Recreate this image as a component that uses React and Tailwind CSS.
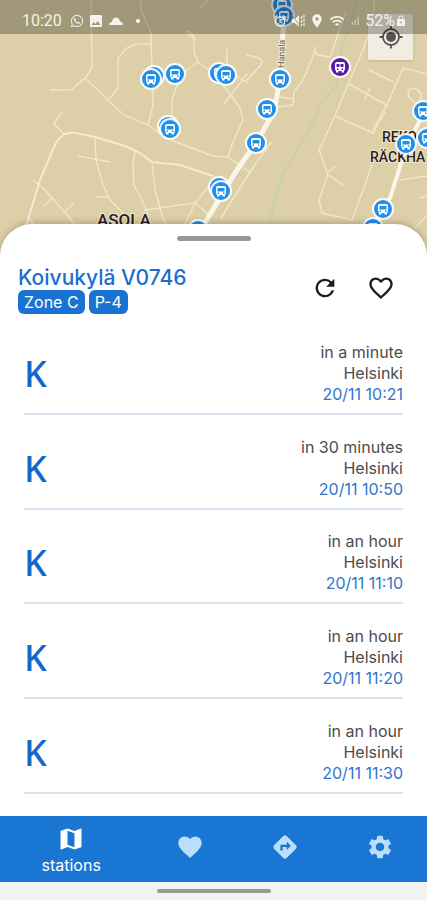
import React from 'react';
import {
  MdAlarm,
  MdDirections,
  MdFavorite,
  MdFavoriteBorder,
  MdImage,
  MdLocationOn,
  MdLock,
  MdMap,
  MdRefresh,
  MdSettings,
  MdSignalCellularAlt,
  MdWifi,
} from 'react-icons/md';
import { FaWhatsapp } from 'react-icons/fa';

const departures = [
  { line: 'K', relative: 'in a minute', destination: 'Helsinki', time: '20/11 10:21' },
  { line: 'K', relative: 'in 30 minutes', destination: 'Helsinki', time: '20/11 10:50' },
  { line: 'K', relative: 'in an hour', destination: 'Helsinki', time: '20/11 11:10' },
  { line: 'K', relative: 'in an hour', destination: 'Helsinki', time: '20/11 11:20' },
  { line: 'K', relative: 'in an hour', destination: 'Helsinki', time: '20/11 11:30' },
];

const stops = [
  [282, 5], [284, 16], [154, 76], [151, 79], [175, 74], [219, 73], [226, 75],
  [280, 79], [267, 109], [168, 126], [170, 129], [256, 143], [219, 187],
  [221, 191], [198, 230], [423, 111], [427, 138], [406, 144], [373, 228], [383, 209],
];

const streets = [
  'M91 0 L92 68 L85 78 L71 90 H50',
  'M85 78 L108 100 L124 115 L148 125 L165 138 L213 156 L228 157 L250 172',
  'M141 0 V10 L151 33 L152 75 L153 105 L148 125',
  'M151 44 H136 L127 48 L118 58 V88 L108 100',
  'M201 7 L209 0',
  'M194 38 C182 32 186 28 192 34 L194 38 V52 L198 62 L187 70 L176 88 L172 100 V125',
  'M198 62 L216 76 L230 94 L240 108 L243 120 L233 142 L228 157',
  'M64 134 L54 124 L61 113',
  'M95 137 L96 160 L103 185 L110 200 L124 214',
  'M78 156 L110 162 M96 197 H108',
  'M135 150 L133 165 L134 185 L147 210 V224',
  'M152 162 L155 190 L162 215 L167 226',
  'M145 210 L195 203 L213 181 M195 203 L207 213 M195 203 L184 226',
  'M33 180 L45 190 L75 224 M45 205 L52 198 M74 203 L65 212 M28 216 L34 226',
  'M227 49 V65 M247 55 C262 58 266 60 258 68 L247 80 M247 74 L224 104 M236 75 L247 83',
  'M315 47 V52 L318 55 L330 57 L345 14 M315 52 L303 80 L294 92 L293 105 L277 107 M280 97 L294 99',
  'M271 142 L250 172 L221 218',
  'M374 0 V18 L363 50 L349 82 L335 116 L319 150 L328 175 L319 200 L322 213 L352 220 L372 165',
  'M349 84 L388 106 M369 70 L393 82 M335 116 L373 133 L385 112 M365 99 L370 88 M373 130 L390 98 L403 68 L427 74',
  'M328 172 L335 167 M328 175 L343 185 M400 180 L427 176 M420 198 L427 196 M427 215 L415 228',
  'M414 102 C404 94 408 86 416 89 C422 92 422 96 420 100',
];

function StopPin({ x, y, train }) {
  return (
    <g transform={`translate(${x} ${y})`}>
      <circle r="11" fill="#fff" opacity="0.9" />
      <circle r="9" fill={train ? '#5a17a8' : '#2090ee'} />
      <rect x="-5" y="-5" width="10" height="9" rx="2" fill="#fff" />
      <path d="M-4 3h2.500v2.500h-2.500z M1.500 3h2.500v2.500h-2.500z" fill="#fff" />
      {train ? (
        <path d="M-3.500 -3h3v3h-3z M0.500 -3h3v3h-3z M-3 1.500h1.500v1.500h-1.500z M1.500 1.500h1.500v1.500h-1.500z" fill="#5a17a8" />
      ) : (
        <path d="M-3.500 -3h7v3.500h-7z M-3.500 1.500h1.500v1.500h-1.500z M2 1.500h1.500v1.500h-1.500z" fill="#2090ee" />
      )}
    </g>
  );
}

function StationMap() {
  return (
    <svg
      className="block w-full h-full"
      viewBox="0 0 427 256"
      preserveAspectRatio="xMidYMin slice"
      role="img"
      aria-label="Map"
    >
      <rect width="427" height="256" fill="#ddcfa7" />
      <g fill="none" strokeLinejoin="round" strokeLinecap="round">
        <path d="M356 0 L350 28 L341 48 L342 66 L336 86 L319 104 M320 108 L308 132 L298 148 L284 172 L276 196 L269 226" stroke="#c5cfb4" strokeWidth="2" />
        {streets.map((d) => (
          <path key={d} d={d} stroke="#f1e6c9" strokeWidth="1.500" />
        ))}
        <path d="M26 226 L40 180 L54 147 C60 134 66 132 76 133 L95 137 L125 146 L140 153 L152 162 L180 165 L213 176" stroke="#f4ebd4" strokeWidth="2" />
        <path d="M285 0 L280 79 L274 112 L256 143 L235 173 L203 226" stroke="#fbf6ea" strokeWidth="5" />
        <path d="M427 106 L406 148 L390 198 L372 230" stroke="#fbf6ea" strokeWidth="4" />
      </g>
      <g fontFamily="Roboto, sans-serif" stroke="#f1e7cd" strokeWidth="2" paintOrder="stroke" fill="#2b1c20">
        <text x="97" y="226" fontSize="17" fontWeight="500">ASOLA</text>
        <text x="382" y="142" fontSize="14" fontWeight="500">REKO</text>
        <text x="370" y="162" fontSize="14" fontWeight="500">RÄCKHA</text>
        <text transform="translate(284 68) rotate(-88)" fontSize="9" fill="#6b6557">Hanala</text>
      </g>
      {stops.map(([x, y]) => (
        <StopPin key={`${x}-${y}`} x={x} y={y} />
      ))}
      <StopPin x={340} y={67} train />
    </svg>
  );
}

function LocateIcon() {
  return (
    <svg className="w-6 h-6" viewBox="0 0 24 24" fill="none" stroke="currentColor" strokeWidth="1.800">
      <circle cx="12" cy="12" r="8" />
      <circle cx="12" cy="12" r="5" fill="currentColor" stroke="none" />
      <path d="M12 0.500v3.500M12 20v3.500M0.500 12h3.500M20 12h3.500" />
    </svg>
  );
}

function StatusBar() {
  return (
    <div className="absolute inset-x-0 top-0 h-[34px] pt-2 pl-[22px] pr-5 flex items-center justify-between bg-black/27 text-[#f5f2ea] text-base font-['Roboto',sans-serif]">
      <div className="flex items-center gap-1">
        <span className="mr-1">10:20</span>
        <FaWhatsapp className="w-[14px] h-[14px]" />
        <MdImage className="w-4 h-4" />
        <svg className="w-4 h-4" viewBox="0 0 16 16" fill="currentColor">
          <path d="M1 12c0-2 1.500-3 3-3C4 6 6 4.500 8 4.500S11.500 6 12 8.500c2 0 3 1.500 3 3.500z" />
        </svg>
        <span className="w-1 h-1 ml-2 rounded-full bg-white" />
      </div>
      <div className="flex items-center gap-1">
        <MdAlarm className="w-[14px] h-[14px]" />
        <svg className="w-[14px] h-[14px]" viewBox="0 0 14 14" fill="currentColor">
          <path d="M1 5h2.500L8 1.500v11L3.500 9H1z" />
          <path d="M1 1l8 11" stroke="#a3987c" strokeWidth="1" />
          <path d="M10.500 2v10M13 1v12" stroke="currentColor" strokeWidth="1.200" strokeDasharray="3 1" />
        </svg>
        <MdLocationOn className="w-4 h-4" />
        <MdWifi className="w-4 h-4" />
        <MdSignalCellularAlt className="w-3 h-3 opacity-50" />
        <span>52%</span>
        <MdLock className="w-3 h-3 -ml-1" />
      </div>
    </div>
  );
}

function DepartureRow({ departure }) {
  return (
    <li className="flex-1 flex items-end justify-between border-b-2 border-[#d9e1f2] pb-2">
      <span className="text-4xl leading-[62px] font-medium text-[#1267c8] font-['Noto_Sans',sans-serif]">
        {departure.line}
      </span>
      <div className="text-right text-base leading-[21px] text-[#4c4c4c]">
        <p>{departure.relative}</p>
        <p>{departure.destination}</p>
        <p className="text-[#2f75cc]">{departure.time}</p>
      </div>
    </li>
  );
}

export default function App() {
  return (
    <div className="min-h-screen flex flex-col bg-white font-['Inter','Roboto',sans-serif]">
      <div className="relative h-64 shrink-0">
        <StationMap />
        <button
          type="button"
          aria-label="My location"
          className="absolute top-[14px] right-[14px] w-[45px] h-[46px] flex items-center justify-center bg-[#f3efe7]/90 rounded-xs shadow text-[#555]"
        >
          <LocateIcon />
        </button>
        <StatusBar />
      </div>

      <main className="relative -mt-8 flex-1 flex flex-col bg-white rounded-t-[32px] shadow-[0_-2px_6px_rgba(0,0,0,0.2)] pb-[22px]">
        <div className="w-[74px] h-[5px] mt-3 mx-auto rounded-full bg-[#999]" />

        <header className="flex items-center justify-between mt-6 pl-[18px] pr-8">
          <div>
            <h1 className="text-[21px] leading-[25px] font-medium text-[#1b6fd0]">Koivukylä V0746</h1>
            <div className="flex gap-1 text-base leading-6 text-white">
              <span className="px-1.5 rounded-md bg-[#1a73d2]">Zone C</span>
              <span className="px-1.5 rounded-md bg-[#1a73d2]">P-4</span>
            </div>
          </div>
          <div className="flex gap-7 pb-1 text-[#1c1c1c]">
            <button type="button" aria-label="Refresh">
              <MdRefresh className="w-7 h-7" />
            </button>
            <button type="button" aria-label="Add to favourites">
              <MdFavoriteBorder className="w-7 h-7" />
            </button>
          </div>
        </header>

        <ul className="flex-1 flex flex-col pt-1.5 px-6">
          {departures.map((departure) => (
            <DepartureRow key={departure.time} departure={departure} />
          ))}
        </ul>
      </main>

      <nav className="relative h-[66px] pb-1 grid grid-cols-[3fr_2fr_2fr_2fr] items-center bg-[#1976d2] text-[#bbdefb]">
        <a href="#stations" className="flex flex-col items-center pt-2 text-white text-base leading-6">
          <MdMap className="w-7 h-7" />
          stations
        </a>
        <a href="#favourites" aria-label="Favourites" className="flex justify-center">
          <MdFavorite className="w-7 h-7" />
        </a>
        <a href="#directions" aria-label="Directions" className="flex justify-center">
          <MdDirections className="w-7 h-7" />
        </a>
        <a href="#settings" aria-label="Settings" className="flex justify-center">
          <MdSettings className="w-7 h-7" />
        </a>
      </nav>
      <div className="h-[18px] flex items-center justify-center bg-[#f2f2f2]">
        <div className="w-[114px] h-1 rounded-full bg-[#999]" />
      </div>
    </div>
  );
}
